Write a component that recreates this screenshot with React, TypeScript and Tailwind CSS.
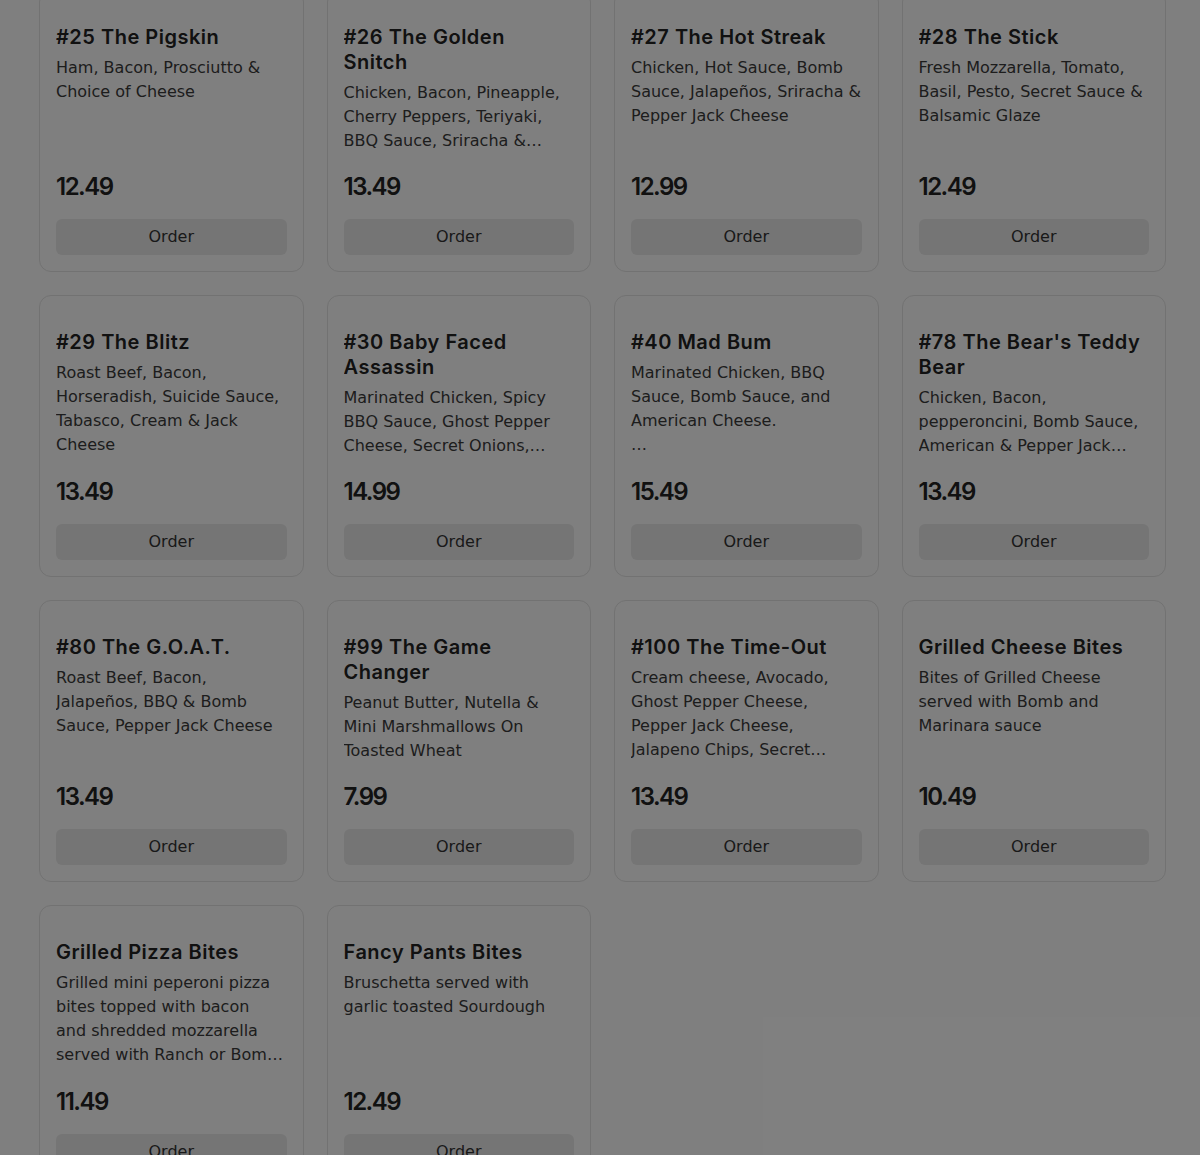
import React from 'react';

type Item = {
  name: string;
  description: string;
  price: string;
  clamp: 'line-clamp-3' | 'line-clamp-4';
};

const items: Item[] = [
  { name: '#25 The Pigskin', description: 'Ham, Bacon, Prosciutto & Choice of Cheese', price: '12.49', clamp: 'line-clamp-4' },
  { name: '#26 The Golden Snitch', description: 'Chicken, Bacon, Pineapple, Cherry Peppers, Teriyaki, BBQ Sauce, Sriracha & Pepper Jack Cheese', price: '13.49', clamp: 'line-clamp-3' },
  { name: '#27 The Hot Streak', description: 'Chicken, Hot Sauce, Bomb Sauce, Jalapeños, Sriracha & Pepper Jack Cheese', price: '12.99', clamp: 'line-clamp-4' },
  { name: '#28 The Stick', description: 'Fresh Mozzarella, Tomato, Basil, Pesto, Secret Sauce & Balsamic Glaze', price: '12.49', clamp: 'line-clamp-4' },
  { name: '#29 The Blitz', description: 'Roast Beef, Bacon, Horseradish, Suicide Sauce, Tabasco, Cream & Jack Cheese', price: '13.49', clamp: 'line-clamp-4' },
  { name: '#30 Baby Faced Assassin', description: 'Marinated Chicken, Spicy BBQ Sauce, Ghost Pepper Cheese, Secret Onions, Jalapeño Chips & Bomb Sauce', price: '14.99', clamp: 'line-clamp-3' },
  { name: '#40 Mad Bum', description: 'Marinated Chicken, BBQ Sauce, Bomb Sauce, and American Cheese.\n\nServed on a toasted roll', price: '15.49', clamp: 'line-clamp-4' },
  { name: "#78 The Bear's Teddy Bear", description: 'Chicken, Bacon, pepperoncini, Bomb Sauce, American & Pepper Jack Cheese', price: '13.49', clamp: 'line-clamp-3' },
  { name: '#80 The G.O.A.T.', description: 'Roast Beef, Bacon, Jalapeños, BBQ & Bomb Sauce, Pepper Jack Cheese', price: '13.49', clamp: 'line-clamp-4' },
  { name: '#99 The Game Changer', description: 'Peanut Butter, Nutella & Mini Marshmallows On Toasted Wheat', price: '7.99', clamp: 'line-clamp-3' },
  { name: '#100 The Time-Out', description: 'Cream cheese, Avocado, Ghost Pepper Cheese, Pepper Jack Cheese, Jalapeno Chips, Secret Onions & Bomb Sauce', price: '13.49', clamp: 'line-clamp-4' },
  { name: 'Grilled Cheese Bites', description: 'Bites of Grilled Cheese served with Bomb and Marinara sauce', price: '10.49', clamp: 'line-clamp-4' },
  { name: 'Grilled Pizza Bites', description: 'Grilled mini peperoni pizza bites topped with bacon and\u00a0shredded mozzarella served with Ranch or Bomb Sauce', price: '11.49', clamp: 'line-clamp-4' },
  { name: 'Fancy Pants Bites', description: 'Bruschetta served with garlic toasted Sourdough', price: '12.49', clamp: 'line-clamp-4' },
];

function MenuCard({ item }: { item: Item }) {
  return (
    <div className="flex flex-col rounded-xl border border-[#e4e4e4] bg-white px-4 pt-[34px] pb-4">
      <div className="h-[128px] overflow-hidden">
        <h3 className="font-['Inter',sans-serif] text-[20px] leading-[25px] font-semibold tracking-[0.5px] text-[#222]">
          {item.name}
        </h3>
        <p className={`mt-1.5 whitespace-pre-line text-[16px] leading-6 text-[#3a3a3a] ${item.clamp}`}>
          {item.description}
        </p>
      </div>
      <div className="mt-[18px] font-['Inter',sans-serif] text-[24px] leading-8 font-semibold tracking-[-1.5px] text-[#222]">
        {item.price}
      </div>
      <button
        type="button"
        className="mt-4 h-9 w-full rounded-md bg-[#ebebeb] text-[16px] text-[#333]"
      >
        Order
      </button>
    </div>
  );
}

export default function App() {
  return (
    <div className="relative h-[1155px] overflow-hidden bg-white" style={{ fontFamily: '"DejaVu Sans", sans-serif' }}>
      <div className="-mt-[10px] ml-[39px] grid w-[1127px] grid-cols-4 gap-[23px]">
        {items.map((item) => (
          <MenuCard key={item.name} item={item} />
        ))}
      </div>
      <div className="absolute inset-0 bg-black/50" />
    </div>
  );
}
